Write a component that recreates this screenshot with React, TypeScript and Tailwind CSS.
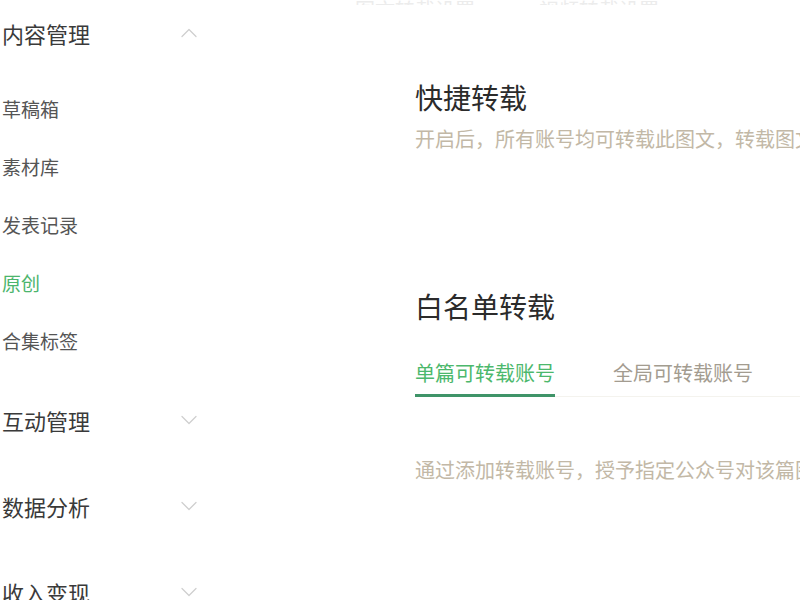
import { ChevronUp, ChevronDown } from 'lucide-react'

const subItems = [
  { label: '草稿箱', active: false },
  { label: '素材库', active: false },
  { label: '发表记录', active: false },
  { label: '原创', active: true },
  { label: '合集标签', active: false },
]

const collapsed = ['互动管理', '数据分析', '收入变现']

const font = { fontFamily: '"Noto Sans CJK SC", "Noto Sans", sans-serif' }

function GroupHeader({ label, open }: { label: string; open: boolean }) {
  return (
    <div className={`flex w-[201px] items-center justify-between ${open ? 'h-[66px]' : 'h-[86px]'}`}>
      <span className="text-[22px] leading-[30px] text-[#3a3a3a]">{label}</span>
      {open ? (
        <ChevronUp size={28} strokeWidth={1.1} className="text-[#cfcfcf]" />
      ) : (
        <ChevronDown size={28} strokeWidth={1.1} className="text-[#cfcfcf]" />
      )}
    </div>
  )
}

function Sidebar() {
  return (
    <aside className="w-[260px] shrink-0 pl-[2px]">
      <GroupHeader label="内容管理" open />
      <ul className="mt-[14px] pb-[7px]">
        {subItems.map((item) => (
          <li
            key={item.label}
            className={`flex h-[58px] items-center text-[19px] ${item.active ? 'text-[#4cb56c]' : 'text-[#555]'}`}
          >
            {item.label}
          </li>
        ))}
      </ul>
      {collapsed.map((label) => (
        <GroupHeader key={label} label={label} open={false} />
      ))}
    </aside>
  )
}

export default function App() {
  return (
    <div className="flex h-[600px] w-[800px] overflow-hidden bg-white" style={font}>
      <Sidebar />
      <main className="min-w-0 flex-1 pl-[155px] whitespace-nowrap">
        {/* tab row above, scrolled mostly out of view */}
        <div className="-ml-[60px] flex h-[5px] items-end gap-[64px] overflow-hidden text-[20px] leading-[20px] text-[#ececec]">
          <span className="-mb-[15px]">图文转载设置</span>
          <span className="-mb-[15px]">视频转载设置</span>
        </div>

        <h2 className="mt-[74px] text-[28px] leading-[36px] text-[#2b2b2b]">快捷转载</h2>
        <p className="mt-[10px] text-[20px] leading-[28px] text-[#c2b8a6]">
          开启后，所有账号均可转载此图文，转载图文时将显示原文来源
        </p>

        <h2 className="mt-[135px] text-[28px] leading-[36px] text-[#2b2b2b]">白名单转载</h2>
        <div className="mt-[35px] flex gap-[58px] border-b border-[#f4f3ee]">
          <button className="-mb-px border-b-[3px] border-[#3f9468] pb-[7px] text-[20px] leading-[28px] text-[#4cb86c]">
            单篇可转载账号
          </button>
          <button className="-mb-px border-b-[3px] border-transparent pb-[7px] text-[20px] leading-[28px] text-[#a39c90]">
            全局可转载账号
          </button>
        </div>
        <p className="mt-[59px] text-[20px] leading-[28px] text-[#c2b8a6]">
          通过添加转载账号，授予指定公众号对该篇图文的转载权限
        </p>
      </main>
    </div>
  )
}
